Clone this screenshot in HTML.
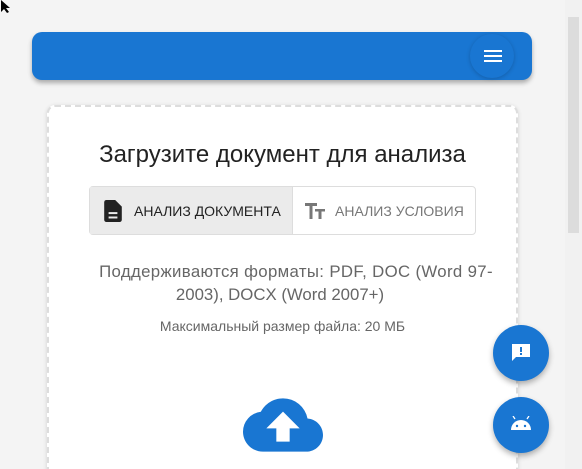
<!DOCTYPE html>
<html><head><meta charset="utf-8"><style>
*{box-sizing:border-box;margin:0;padding:0}
html,body{width:582px;height:469px;overflow:hidden}
body{background:#f4f4f4;font-family:"Liberation Sans",sans-serif;position:relative}
.sb{position:absolute;left:565px;top:0;width:17px;height:469px;background:#f1f1f1}
.sb .t{position:absolute;left:3px;top:17px;width:11px;height:216px;background:#dcdcdc}
.hdr{position:absolute;left:32px;top:32px;width:500px;height:48px;background:#1976d2;border-radius:10px;box-shadow:0 3px 5px rgba(0,0,0,.3)}
.mb{position:absolute;left:438px;top:2px;width:44px;height:44px;border-radius:50%;box-shadow:0 1px 4px rgba(0,0,0,.2)}
.mb i{position:absolute;left:14px;width:18px;height:2px;background:#fff}
.card{position:absolute;left:47px;top:105px;width:471px;height:380px;background:#fff;border:2px dashed #ddd;border-radius:8px;box-shadow:0 1px 4px rgba(0,0,0,.15)}
h1{position:absolute;left:47px;width:471px;top:141px;text-align:center;font-weight:normal;font-size:24px;color:#222}
.tg{position:absolute;left:89px;top:186px;width:387px;height:49px;border:1px solid #ddd;border-radius:4px;display:flex;font-size:14px}
.tg div{display:flex;align-items:center;height:100%}
.a{width:203px;background:#ebebeb;border-right:1px solid #ddd;padding-left:14px;color:#222}
.b{flex:1;padding-left:12px;color:#777}
.p{position:absolute;text-align:center;color:#666;white-space:nowrap}
.fab{position:absolute;left:493px;width:56px;height:56px;border-radius:50%;background:#1976d2;box-shadow:0 3px 6px rgba(0,0,0,.3)}
</style></head><body>
<svg style="position:absolute;left:0;top:0" width="12" height="14"><path d="M1 0L1 12L4 9L7 13L9 12L6 8L10 8Z" fill="#000"/></svg>
<div class="sb"><div class="t"></div></div>
<div class="hdr"><div class="mb"><i style="top:16px"></i><i style="top:21px"></i><i style="top:26px"></i></div></div>
<div class="card"></div>
<h1>Загрузите документ для анализа</h1>
<div class="tg">
<div class="a"><svg width="18" height="22" viewBox="0 0 16 20"><path d="M2 0h8l6 6v12a2 2 0 0 1-2 2H2a2 2 0 0 1-2-2V2a2 2 0 0 1 2-2z" fill="#222"/><rect x="4" y="11" width="8" height="1.8" fill="#ebebeb"/><rect x="4" y="15" width="8" height="1.8" fill="#ebebeb"/></svg><span style="margin-left:12px">АНАЛИЗ ДОКУМЕНТА</span></div>
<div class="b"><svg width="20" height="16" viewBox="0 0 20 16"><path d="M0 0h12v3H7.5v13h-3V3H0z M10 6h10v2.5h-3.5V16h-3V8.5H10z" fill="#777"/></svg><span style="margin-left:10px">АНАЛИЗ УСЛОВИЯ</span></div>
</div>
<div class="p" style="top:262px;font-size:16.8px;left:96px;width:400px;letter-spacing:0.35px">Поддерживаются форматы: PDF, DOC (Word 97-</div>
<div class="p" style="top:285px;font-size:16.8px;left:130px;width:300px">2003), DOCX (Word 2007+)</div>
<div class="p" style="top:318px;font-size:14px;left:47px;width:471px">Максимальный размер файла: 20 МБ</div>
<svg style="position:absolute;left:243px;top:398px" width="80" height="54" viewBox="0 0 24 16"><path d="M19.35 6.04A7.49 7.49 0 0 0 12 0C9.110 0 6.6 1.64 5.35 4.040A5.994 5.994 0 0 0 0 10c0 3.31 2.690 6 6 6h13c2.76 0 5-2.24 5-5 0-2.64-2.050-4.78-4.65-4.96z" fill="#1976d2"/><path d="M12 4l-5 5h3v4h4V9h3z" fill="#fff"/></svg>
<div class="fab" style="top:325px"><svg style="position:absolute;left:18px;top:18px" width="20" height="20" viewBox="0 0 20 20"><path d="M1 1h18v13H5l-4 4z" fill="#fff"/><rect x="9" y="4" width="2" height="5" fill="#1976d2"/><rect x="9" y="10" width="2" height="2" fill="#1976d2"/></svg></div>
<div class="fab" style="top:397px"><svg style="position:absolute;left:17px;top:19px" width="22" height="16" viewBox="0 0 22 16"><path d="M1 14a10 10 0 0 1 20 0z" fill="#fff"/><path d="M5 3l-2-3M17 3l2-3" stroke="#fff" stroke-width="1.3"/><circle cx="7" cy="10" r="1.2" fill="#1976d2"/><circle cx="15" cy="10" r="1.2" fill="#1976d2"/></svg></div>
</body></html>
